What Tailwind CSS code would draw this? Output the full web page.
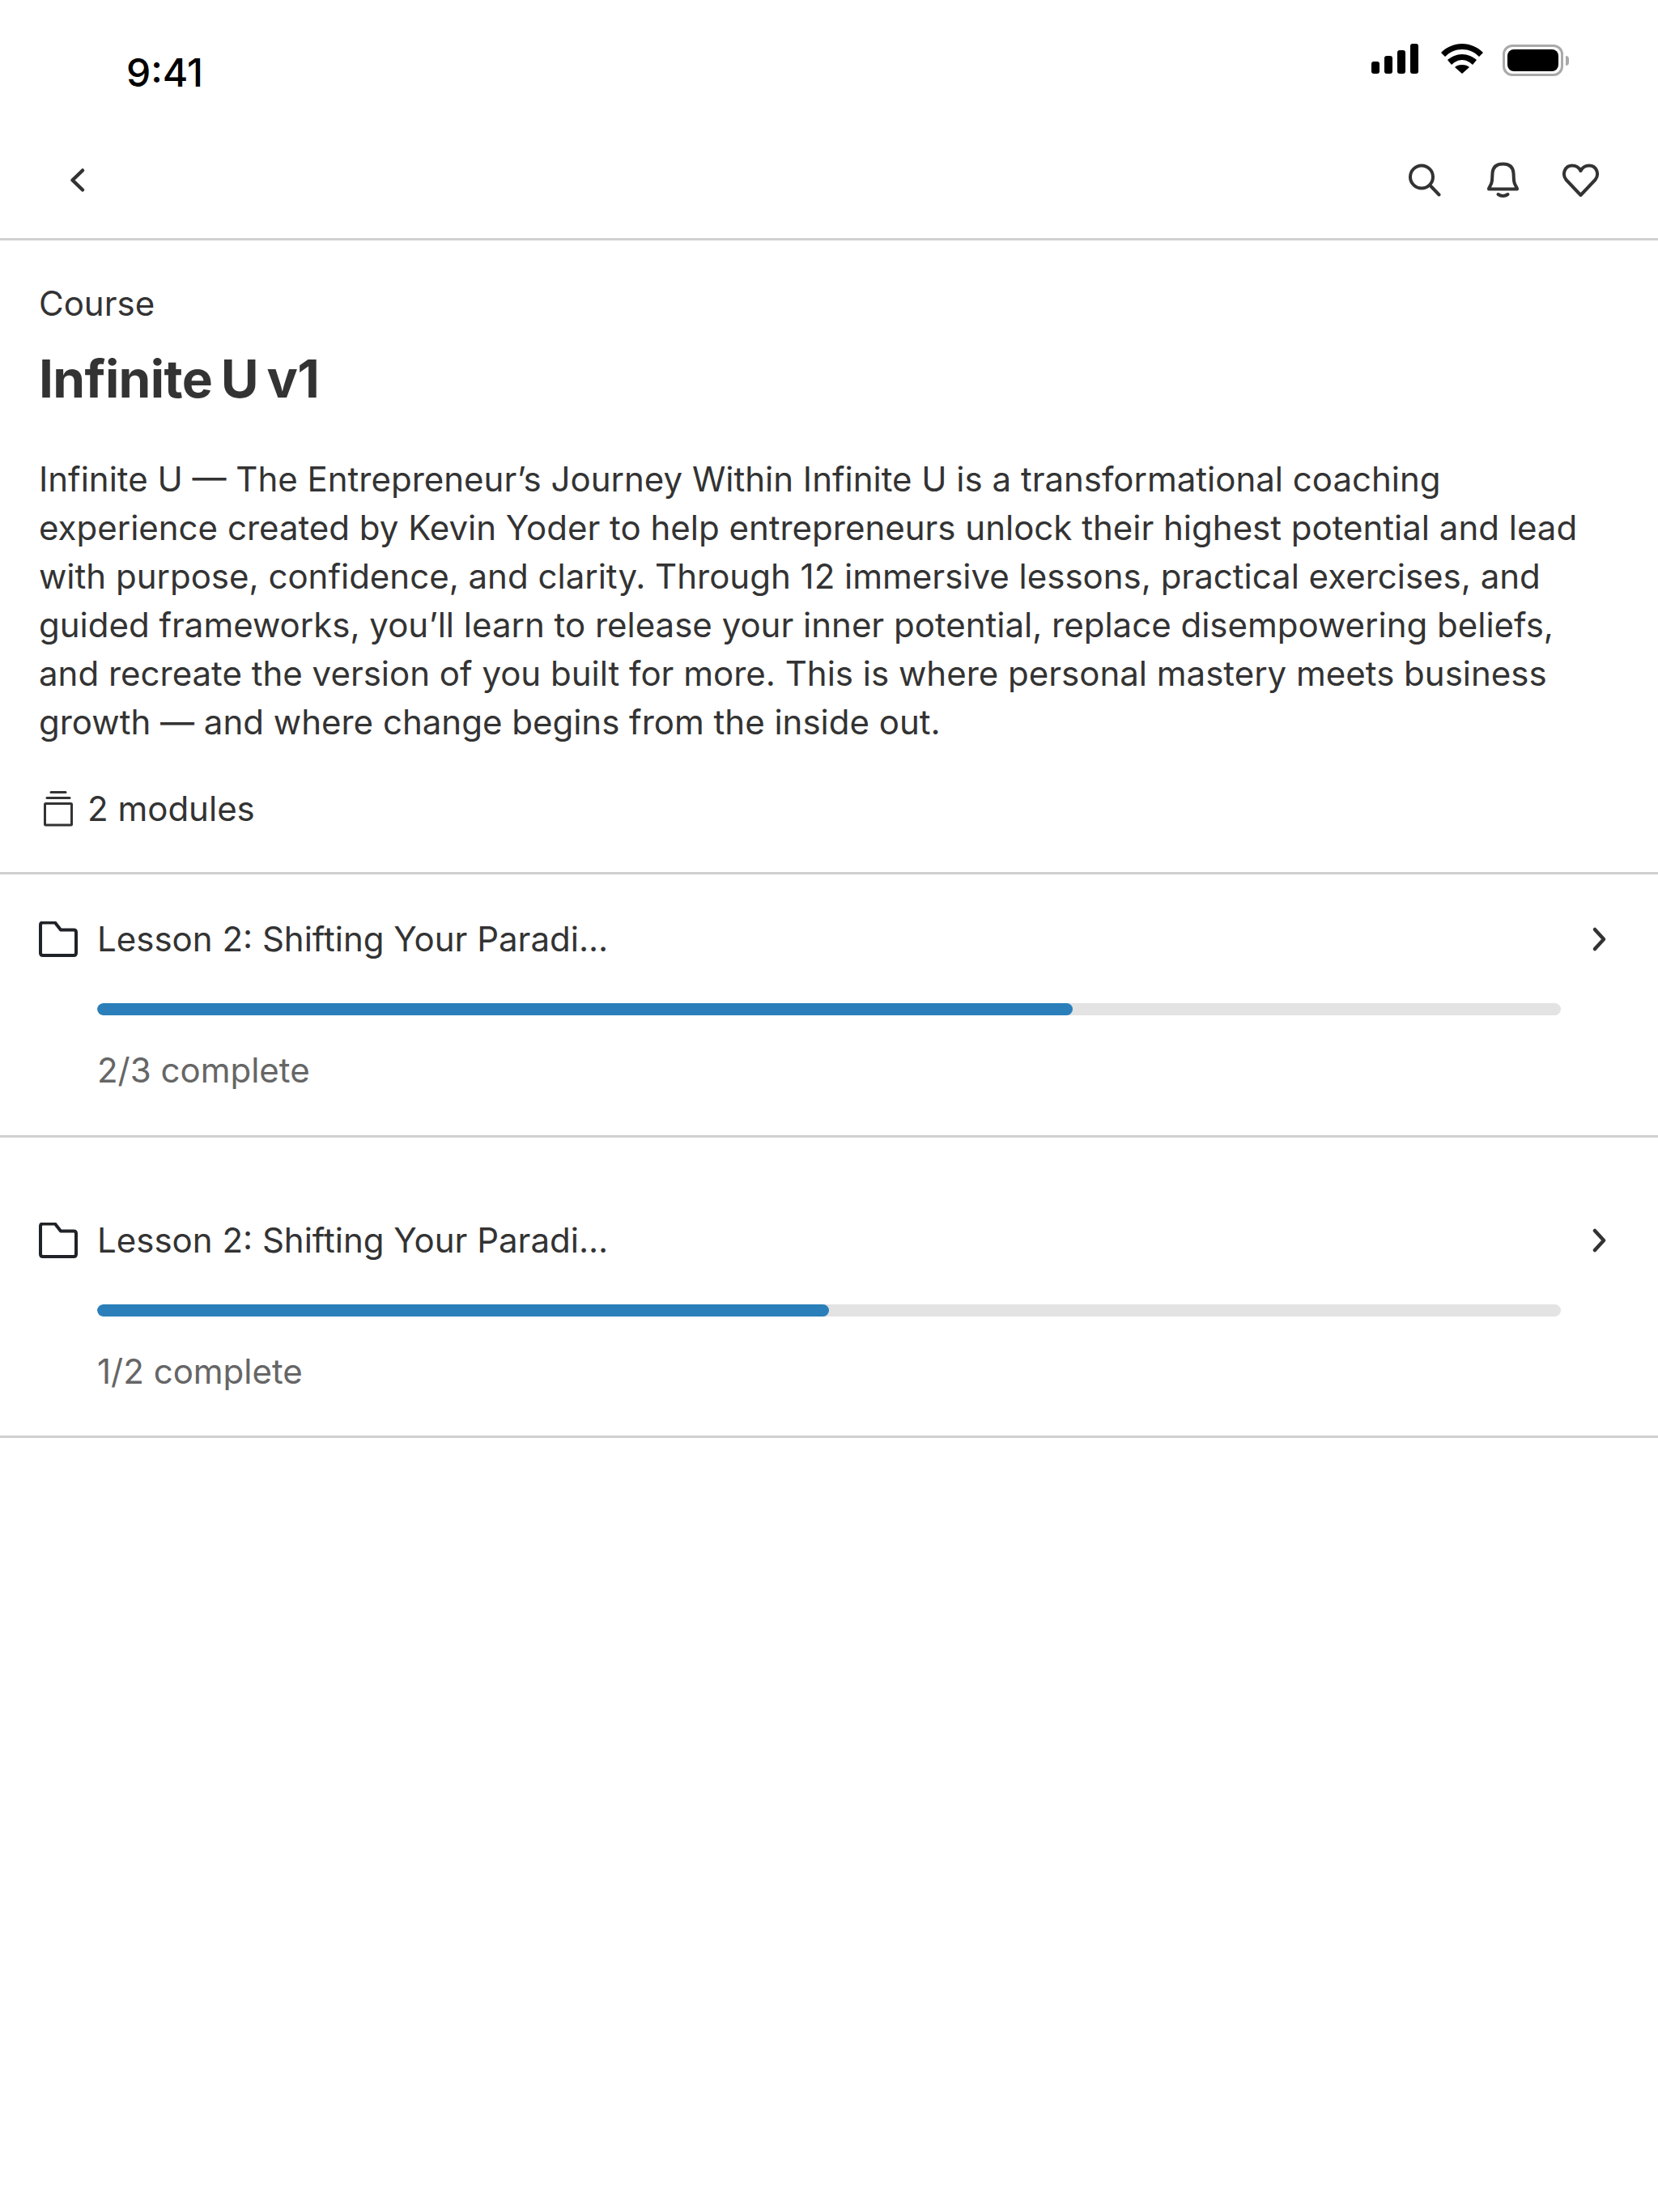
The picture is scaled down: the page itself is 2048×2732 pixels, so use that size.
<!DOCTYPE html>
<html lang="en">
<head>
    <meta charset="UTF-8" />
    <meta name="viewport" content="width=device-width, initial-scale=1" />
    <title>Infinite U v1</title>
    <script src="https://cdn.jsdelivr.net/npm/@tailwindcss/browser@4"></script>
</head>
<body class="bg-white min-h-screen font-['Inter',sans-serif] text-[#333333]">
    <!-- status bar -->
    <div class="h-[174px] flex items-start justify-between pl-[156px] pr-[110px]">
        <span class="mt-[60px] text-[48px] leading-[60px] font-medium text-black">9:41</span>
        <div class="flex items-start mt-[54px]">
            <svg class="w-[58px] h-[37px]" viewBox="0 0 58 37" fill="#000">
                <rect x="0" y="22" width="10" height="15" rx="3" />
                <rect x="16" y="15" width="10" height="22" rx="3" />
                <rect x="32" y="8" width="10" height="29" rx="3" />
                <rect x="48" y="0" width="10" height="37" rx="3" />
            </svg>
            <svg class="w-[52px] h-[37px] ml-[28px]" viewBox="0 0 52 37" fill="#000">
                <path d="M26 0C16 0 7 4 0 11l5 5C11 10 18 7 26 7s15 3 21 9l5-5C45 4 36 0 26 0z" />
                <path d="M26 13c-7 0-13 3-18 7l5 6c3-3 8-6 13-6s10 3 13 6l5-6c-5-4-11-7-18-7z" />
                <path d="M26 26c-4 0-7 1-9 3l9 8 9-8c-2-2-5-3-9-3z" />
            </svg>
            <div class="flex items-center ml-[24px] mt-[1px]">
                <div class="w-[75px] h-[39px] rounded-[12px] border-[3px] border-[#a9a9a9] p-[3px]">
                    <div class="w-full h-full rounded-[8px] bg-black"></div>
                </div>
                <div class="w-[4px] h-[12px] ml-[3px] rounded-r-full bg-[#a9a9a9]"></div>
            </div>
        </div>
    </div>

    <!-- nav -->
    <div class="h-[123px] pb-[27px] flex items-center justify-between pl-[72px] pr-[72px] border-b-[3px] border-[#d0d0d0]">
        <svg class="w-[48px] h-[48px]" viewBox="0 0 48 48" fill="none" stroke="#333" stroke-width="4.500" stroke-linecap="round" stroke-linejoin="round">
            <path d="M30 13.500 L17.500 25.500 L30 37.500" />
        </svg>
        <div class="flex items-center gap-[48px]">
            <svg class="w-[48px] h-[48px]" viewBox="0 0 48 48" fill="none" stroke="#333" stroke-width="4" stroke-linecap="round">
                <circle cx="20" cy="21.500" r="14" />
                <path d="M30.500 32 L41.500 43.500" />
            </svg>
            <svg class="w-[48px] h-[48px]" viewBox="0 0 48 48" fill="none" stroke="#333" stroke-width="4" stroke-linecap="round" stroke-linejoin="round">
                <path d="M7 36.500 C7 34 10.500 32 11 26 L11.500 17 C12 9 17 5.500 24.500 5.500 C32 5.500 37 9 37.500 17 L38 26 C38.500 32 42 34 42 36.500 Z" />
                <path d="M18.500 43 C22 45.500 27 45.500 30.500 43" />
            </svg>
            <svg class="w-[48px] h-[48px]" viewBox="0 0 48 48" fill="none" stroke="#333" stroke-width="4" stroke-linecap="round" stroke-linejoin="round">
                <path d="M24.500 44 L6.500 25 C1 18 5 7.500 14 7.500 C19 7.500 22.500 10 24.500 14 C26.500 10 30 7.500 35 7.500 C44 7.500 48 18 42.500 25 Z" />
            </svg>
        </div>
    </div>

    <!-- course info -->
    <section class="px-[48px] pt-[53px] pb-[53px] border-b-[3px] border-[#d0d0d0]">
        <p class="text-[42px] leading-[50px]">Course</p>
        <h1 class="mt-[31px] text-[64px] leading-[74px] font-bold tracking-[-0.01em] [word-spacing:-4px]">Infinite U v1</h1>
        <p class="mt-[57px] text-[42px] leading-[60px]">Infinite U — The Entrepreneur’s Journey Within Infinite U is a transformational coaching experience created by Kevin Yoder to help entrepreneurs unlock their highest potential and lead with purpose, confidence, and clarity. Through 12 immersive lessons, practical exercises, and guided frameworks, you’ll learn to release your inner potential, replace disempowering beliefs, and recreate the version of you built for more. This is where personal mastery meets business growth — and where change begins from the inside out.</p>
        <div class="mt-[52px] flex items-center gap-[18px] h-[50px]">
            <svg class="ml-[6px] w-[36px] h-[44px]" viewBox="0 0 36 44" fill="none" stroke="#333" stroke-width="3">
                <rect x="1.500" y="15.500" width="33" height="26.500" rx="1" />
                <path d="M4 8.500 H32" stroke-linecap="round" />
                <path d="M9 1.500 H27" stroke-linecap="round" />
            </svg>
            <span class="text-[42px] leading-[50px]">2 modules</span>
        </div>
    </section>

    <!-- lessons -->
    <section class="pt-[55px] pb-[55px] pl-[48px] pr-[48px] border-b-[3px] border-[#d0d0d0]">
        <div class="flex items-center h-[50px]">
            <svg class="w-[48px] h-[44px] shrink-0" viewBox="0 0 48 44" fill="none" stroke="#1f2328" stroke-width="4" stroke-linejoin="round">
                <path d="M2 4 Q2 1.500 5 1.500 H20 L27 10.500 H43 Q46 10.500 46 13.500 V39 Q46 42 43 42 H5 Q2 42 2 39 Z" />
            </svg>
            <span class="ml-[24px] text-[42px] leading-[50px] flex-1">Lesson 2: Shifting Your Paradi...</span>
            <svg class="w-[24px] h-[32px] mr-[11px]" viewBox="0 0 24 32" fill="none" stroke="#333" stroke-width="4.500" stroke-linecap="round" stroke-linejoin="round">
                <path d="M5 4 L16 16 L5 28" />
            </svg>
        </div>
        <div class="ml-[72px] mr-[72px] mt-[54px] h-[15px] rounded-full bg-[#e3e3e3] overflow-hidden">
            <div class="h-full rounded-full bg-[#2a7fba]" style="width: 66.67%"></div>
        </div>
        <p class="ml-[72px] mt-[43px] text-[42px] leading-[50px] text-[#666666]">2/3 complete</p>
    </section>

    <section class="pt-[102px] pb-[54px] pl-[48px] pr-[48px] border-b-[3px] border-[#d0d0d0]">
        <div class="flex items-center h-[50px]">
            <svg class="w-[48px] h-[44px] shrink-0" viewBox="0 0 48 44" fill="none" stroke="#1f2328" stroke-width="4" stroke-linejoin="round">
                <path d="M2 4 Q2 1.500 5 1.500 H20 L27 10.500 H43 Q46 10.500 46 13.500 V39 Q46 42 43 42 H5 Q2 42 2 39 Z" />
            </svg>
            <span class="ml-[24px] text-[42px] leading-[50px] flex-1">Lesson 2: Shifting Your Paradi...</span>
            <svg class="w-[24px] h-[32px] mr-[11px]" viewBox="0 0 24 32" fill="none" stroke="#333" stroke-width="4.500" stroke-linecap="round" stroke-linejoin="round">
                <path d="M5 4 L16 16 L5 28" />
            </svg>
        </div>
        <div class="ml-[72px] mr-[72px] mt-[54px] h-[15px] rounded-full bg-[#e3e3e3] overflow-hidden">
            <div class="h-full rounded-full bg-[#2a7fba]" style="width: 50%"></div>
        </div>
        <p class="ml-[72px] mt-[43px] text-[42px] leading-[50px] text-[#666666]">1/2 complete</p>
    </section>
</body>
</html>
